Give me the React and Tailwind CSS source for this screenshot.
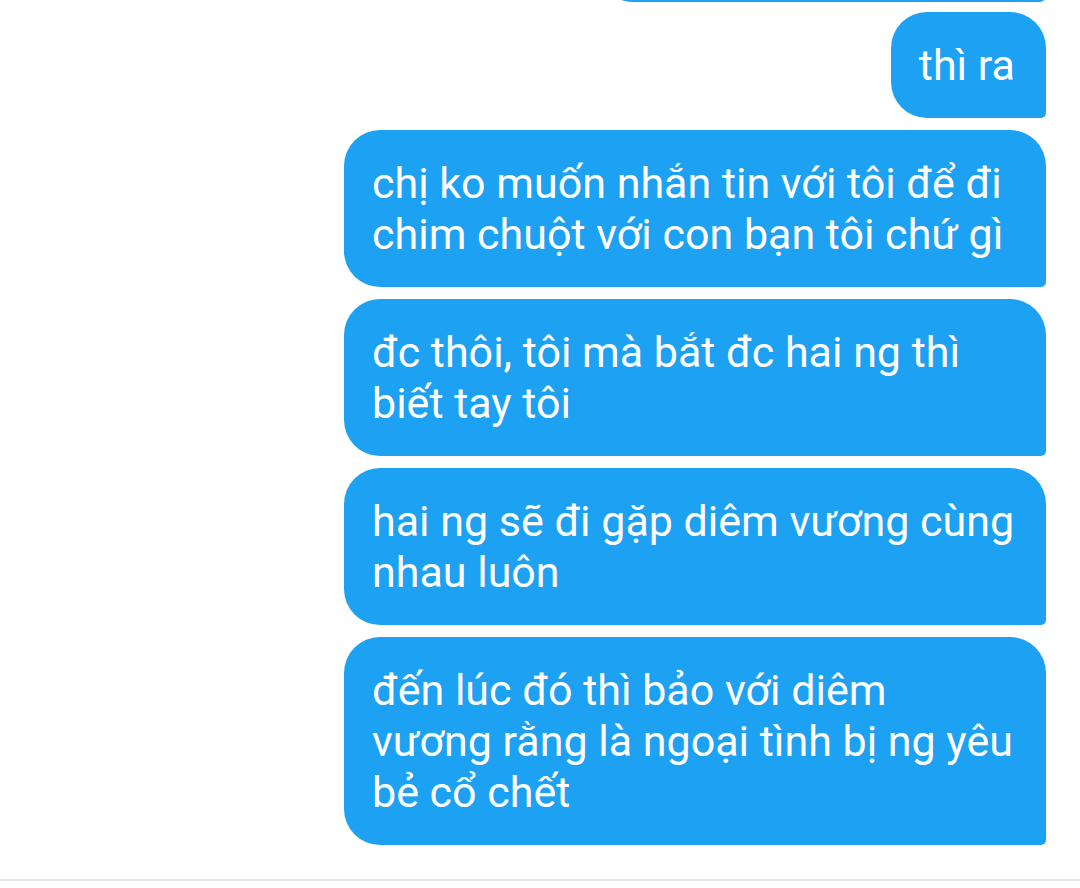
import React from 'react';

const messages = [
  ['thì ra'],
  ['chị ko muốn nhắn tin với tôi để đi', 'chim chuột với con bạn tôi chứ gì'],
  ['đc thôi, tôi mà bắt đc hai ng thì', 'biết tay tôi'],
  ['hai ng sẽ đi gặp diêm vương cùng', 'nhau luôn'],
  ['đến lúc đó thì bảo với diêm', 'vương rằng là ngoại tình bị ng yêu', 'bẻ cổ chết'],
];

const Bubble = ({ lines }) => (
  <div
    className={`bg-[#1da1f2] text-white rounded-tl-[36px] rounded-tr-[36px] rounded-bl-[36px] rounded-br-[5px] pl-[28px] pr-[31px] pt-[28px] pb-[27px] text-[43px] leading-[51px] whitespace-nowrap ${lines.length > 1 ? 'w-[702px]' : ''}`}
  >
    {lines.map((l, i) => (
      <div key={i}>{l}</div>
    ))}
  </div>
);

export default function App() {
  return (
    <div className="h-[888px] w-[1080px] bg-white overflow-hidden flex flex-col" style={{ fontFamily: 'Roboto, "Noto Sans", sans-serif' }}>
      <div className="flex-1 flex flex-col items-end gap-3 pr-[34px]">
        {/* previous message, mostly scrolled off */}
        <div className="w-[448px] h-[40px] -mt-[38px] -mb-[2px] bg-[#1da1f2] rounded-bl-[36px] rounded-br-[5px] mr-[1px]" />
        {messages.map((m, i) => (
          <Bubble key={i} lines={m} />
        ))}
      </div>
      <div className="h-[9px] border-t-2 border-[#e8e8e8] bg-white" />
    </div>
  );
}
